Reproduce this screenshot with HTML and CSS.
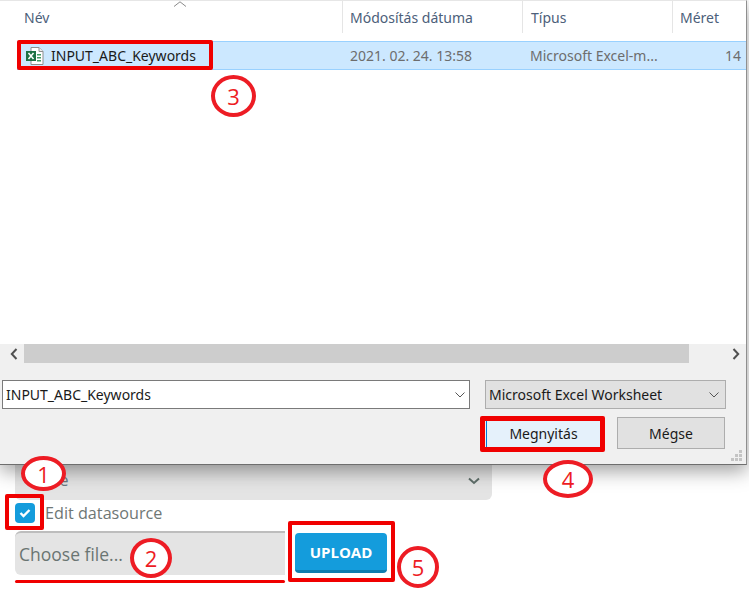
FILE: index.html
```html
<!DOCTYPE html>
<html lang="hu">
<head>
<meta charset="utf-8">
<title>Upload</title>
<link rel="stylesheet" href="styles.css">
</head>
<body>
<main class="page">
  <div class="select-row"><span>Table</span>
    <svg class="select-chevron" width="12" height="8" viewBox="0 0 12 8"><path d="M1 1.5l5 4.5 5-4.5" fill="none" stroke="#5f6f6a" stroke-width="2"/></svg>
  </div>
  <label class="check-row">
    <span class="checkbox"><svg width="12" height="10" viewBox="0 0 12 10"><path d="M1.5 5l3 3 6-6" fill="none" stroke="#fff" stroke-width="2.4"/></svg></span>
    <span>Edit datasource</span>
  </label>
  <div class="file-row">
    <div class="file-box">Choose file...</div>
    <button class="upload">UPLOAD</button>
  </div>
</main>

<section class="dialog">
  <div class="list">
    <div class="list-head">
      <div class="hcol hcol-name">Név</div>
      <div class="hcol hcol-date">Módosítás dátuma</div>
      <div class="hcol hcol-type">Típus</div>
      <div class="hcol hcol-size">Méret</div>
      <svg class="sort" width="14" height="6" viewBox="0 0 14 6"><path d="M1 5.5L7 .8l6 4.7" fill="none" stroke="#8a8a8a" stroke-width="1"/></svg>
    </div>
    <div class="file-line">
      <div class="cell cell-name">
        <svg class="xls" width="18" height="18" viewBox="0 0 18 18">
          <path d="M5 .5h8l4 4v13H5z" fill="#fff" stroke="#8e8e8e"/>
          <path d="M13 .5v4h4" fill="#eee" stroke="#8e8e8e"/>
          <path d="M11 7h4v1.5h-4zM11 10h4v1.500h-4zM11 13h4v1.500h-4z" fill="#3f9a62"/>
          <rect x="0" y="4" width="10" height="10" fill="#1e7145"/>
          <path d="M2.500 6l5 6M7.500 6l-5 6" stroke="#fff" stroke-width="1.500"/>
        </svg>
        <span class="name">INPUT_ABC_Keywords</span>
      </div>
      <div class="cell cell-date">2021. 02. 24. 13:58</div>
      <div class="cell cell-type">Microsoft Excel-m...</div>
      <div class="cell cell-size">14</div>
    </div>
  </div>
  <div class="hscroll">
    <div class="arrow"><svg width="8" height="12" viewBox="0 0 8 12"><path d="M6.500 1L1.800 6l4.700 5" fill="none" stroke="#505050" stroke-width="2"/></svg></div>
    <div class="track"></div>
    <div class="arrow arrow-right"><svg width="8" height="12" viewBox="0 0 8 12"><path d="M1.500 1l4.700 5-4.700 5" fill="none" stroke="#505050" stroke-width="2"/></svg></div>
  </div>
  <div class="panel">
    <div class="fields">
      <div class="field field-name"><span>INPUT_ABC_Keywords</span>
        <svg width="10" height="6" viewBox="0 0 10 6"><path d="M.5.5L5 5 9.500.5" fill="none" stroke="#555"/></svg>
      </div>
      <div class="field field-type"><span>Microsoft Excel Worksheet</span>
        <svg width="10" height="6" viewBox="0 0 10 6"><path d="M.5.5L5 5 9.500.5" fill="none" stroke="#555"/></svg>
      </div>
    </div>
    <div class="actions">
      <button class="btn btn-primary">Megnyitás</button>
      <button class="btn btn-cancel">Mégse</button>
    </div>
    <svg class="grip" width="12" height="12" viewBox="0 0 12 12"><path d="M8 0h3v3H8zM4 4h3v3H4zM8 4h3v3H8zM0 8h3v3H0zM4 8h3v3H4zM8 8h3v3H8z" fill="#c4c4c4"/></svg>
  </div>
</section>

<div class="mark mark-file"></div>
<div class="mark mark-open"></div>
<div class="mark mark-check"></div>
<div class="mark mark-upload"></div>
<div class="underline"></div>
<div class="num num-1">1</div>
<div class="num num-2">2</div>
<div class="num num-3">3</div>
<div class="num num-4">4</div>
<div class="num num-5">5</div>
</body>
</html>
```
FILE: styles.css
```css
* { box-sizing: border-box; }
html, body { margin: 0; height: 100%; }
body {
  position: relative;
  width: 749px;
  height: 598px;
  overflow: hidden;
  background: #fff;
  font-family: "Open Sans", "Noto Sans", sans-serif;
}
button { font-family: inherit; margin: 0; }

/* underlying page */
.page { padding: 400px 0 0 15px; width: 492px; }
.select-row {
  height: 100px;
  width: 477px;
  padding: 0 13px 8px;
  display: flex;
  align-items: flex-end;
  justify-content: space-between;
  background: #e4e4e4;
  border-radius: 0 0 6px 6px;
  color: #6a7880;
  font-size: 16px;
  line-height: 24px;
}
.select-chevron { margin: 0 -1px 7px 0; }
.check-row {
  height: 25px;
  margin-bottom: 6px;
  display: flex;
  align-items: center;
  gap: 10px;
  color: #6f7775;
  font-size: 16.2px;
}
.checkbox {
  width: 20px;
  height: 20px;
  border-radius: 4px;
  background: #149cdc;
  display: flex;
  align-items: center;
  justify-content: center;
}
.file-row { display: flex; align-items: flex-start; gap: 10px; }
.file-box {
  width: 270px;
  height: 44px;
  padding-left: 4px;
  background: #e4e4e4;
  border-top: 2px solid #bdbdbd;
  border-radius: 6px 0 0 6px;
  color: #6a7572;
  font-size: 17.5px;
  line-height: 42px;
}
.upload {
  width: 92px;
  height: 40px;
  margin-top: 2px;
  border: 0;
  border-bottom: 3px solid #0f7cae;
  border-radius: 4px;
  background: #149cdc;
  color: #fff;
  font-size: 15px;
  font-weight: 700;
}

/* file dialog */
.dialog {
  position: absolute;
  left: 0;
  top: 0;
  width: 747px;
  height: 465px;
  display: flex;
  flex-direction: column;
  background: #f0f0f0;
  border-right: 1px solid #8f8f8f;
  border-bottom: 1px solid #6e6e6e;
  border-top: 1px solid #e6e6e6;
  box-shadow: 0 6px 18px rgba(0, 0, 0, .38);
  font-family: "Noto Sans", "Open Sans", sans-serif;
  font-size: 14px;
}
.list { height: 343px; background: #fff; }
.list-head {
  position: relative;
  height: 32px;
  display: flex;
  color: #4c607a;
}
.hcol { height: 32px; line-height: 33px; padding-left: 8px; border-right: 1px solid #e5e5e5; }
.hcol-name { width: 343px; padding-left: 24px; }
.hcol-date { width: 180px; padding-left: 7px; }
.hcol-type { width: 150px; }
.hcol-size { width: 70px; padding-left: 7px; border-right: 0; }
.sort { position: absolute; left: 173px; top: 0; }
.file-line {
  height: 29px;
  margin: 8px 0 0 17px;
  display: flex;
  align-items: center;
  background: #cce8ff;
  border: 1px solid #99d1ff;
  border-right: 0;
  color: #6d6d6d;
}
.cell { white-space: nowrap; }
.cell-name { width: 332px; display: flex; align-items: center; gap: 7px; padding-left: 8px; color: #1a1a1a; }
.cell-date { width: 180px; }
.cell-type { width: 150px; }
.cell-size { width: 61px; text-align: right; }
.xls { flex: none; }
.hscroll { height: 19px; display: flex; }
.arrow { width: 24px; display: flex; align-items: center; justify-content: center; padding-left: 3px; }
.arrow-right { width: 57px; padding: 0 0 0 37px; }
.track { flex: 1; background: #cdcdcd; }
.panel { position: relative; flex: 1; padding: 17px 0 0 2px; }
.fields { display: flex; gap: 15px; }
.field {
  height: 29px;
  display: flex;
  align-items: center;
  justify-content: space-between;
  color: #1a1a1a;
}
.field svg { flex: none; }
.field-name { width: 468px; padding: 0 4px 0 3px; background: #fff; border: 1px solid #7a7a7a; }
.field-type { width: 241px; padding: 0 6px 0 3px; background: #e1e1e1; border: 1px solid #adadad; }
.actions { display: flex; gap: 16px; margin: 8px 0 0 484px; }
.btn { height: 32px; font-size: 14px; font-family: "Noto Sans", sans-serif; color: #1a1a1a; padding: 0; }
.btn-primary { width: 115px; margin-top: 1px; height: 31px; background: #e5f1fb; border: 1px solid #0078d7; }
.btn-cancel { width: 108px; background: #e1e1e1; border: 1px solid #adadad; }
.grip { position: absolute; right: 3px; bottom: 2px; }

/* annotations */
.mark { position: absolute; border: 4px solid #f00000; border-radius: 2px; }
.mark-file { left: 17px; top: 40px; width: 196px; height: 30px; }
.mark-open { left: 480px; top: 416px; width: 125px; height: 36px; border-width: 5px; }
.mark-check { left: 5px; top: 494px; width: 39px; height: 36px; }
.mark-upload { left: 288px; top: 521px; width: 107px; height: 61px; }
.underline { position: absolute; left: 15px; top: 580px; width: 270px; height: 3px; background: #f00000; border-radius: 2px; }
.num {
  position: absolute;
  display: flex;
  align-items: center;
  justify-content: center;
  background: #fff;
  border: 4px solid #ed1c24;
  border-radius: 50%;
  color: #ed1c24;
  font-family: "Open Sans", sans-serif;
  font-size: 22px;
}
.num-1 { left: 21px; top: 456px; width: 45px; height: 35px; }
.num-2 { left: 130px; top: 538px; width: 42px; height: 40px; }
.num-3 { left: 211px; top: 75px; width: 45px; height: 42px; }
.num-4 { left: 543px; top: 460px; width: 50px; height: 38px; }
.num-5 { left: 397px; top: 546px; width: 42px; height: 42px; }
```
